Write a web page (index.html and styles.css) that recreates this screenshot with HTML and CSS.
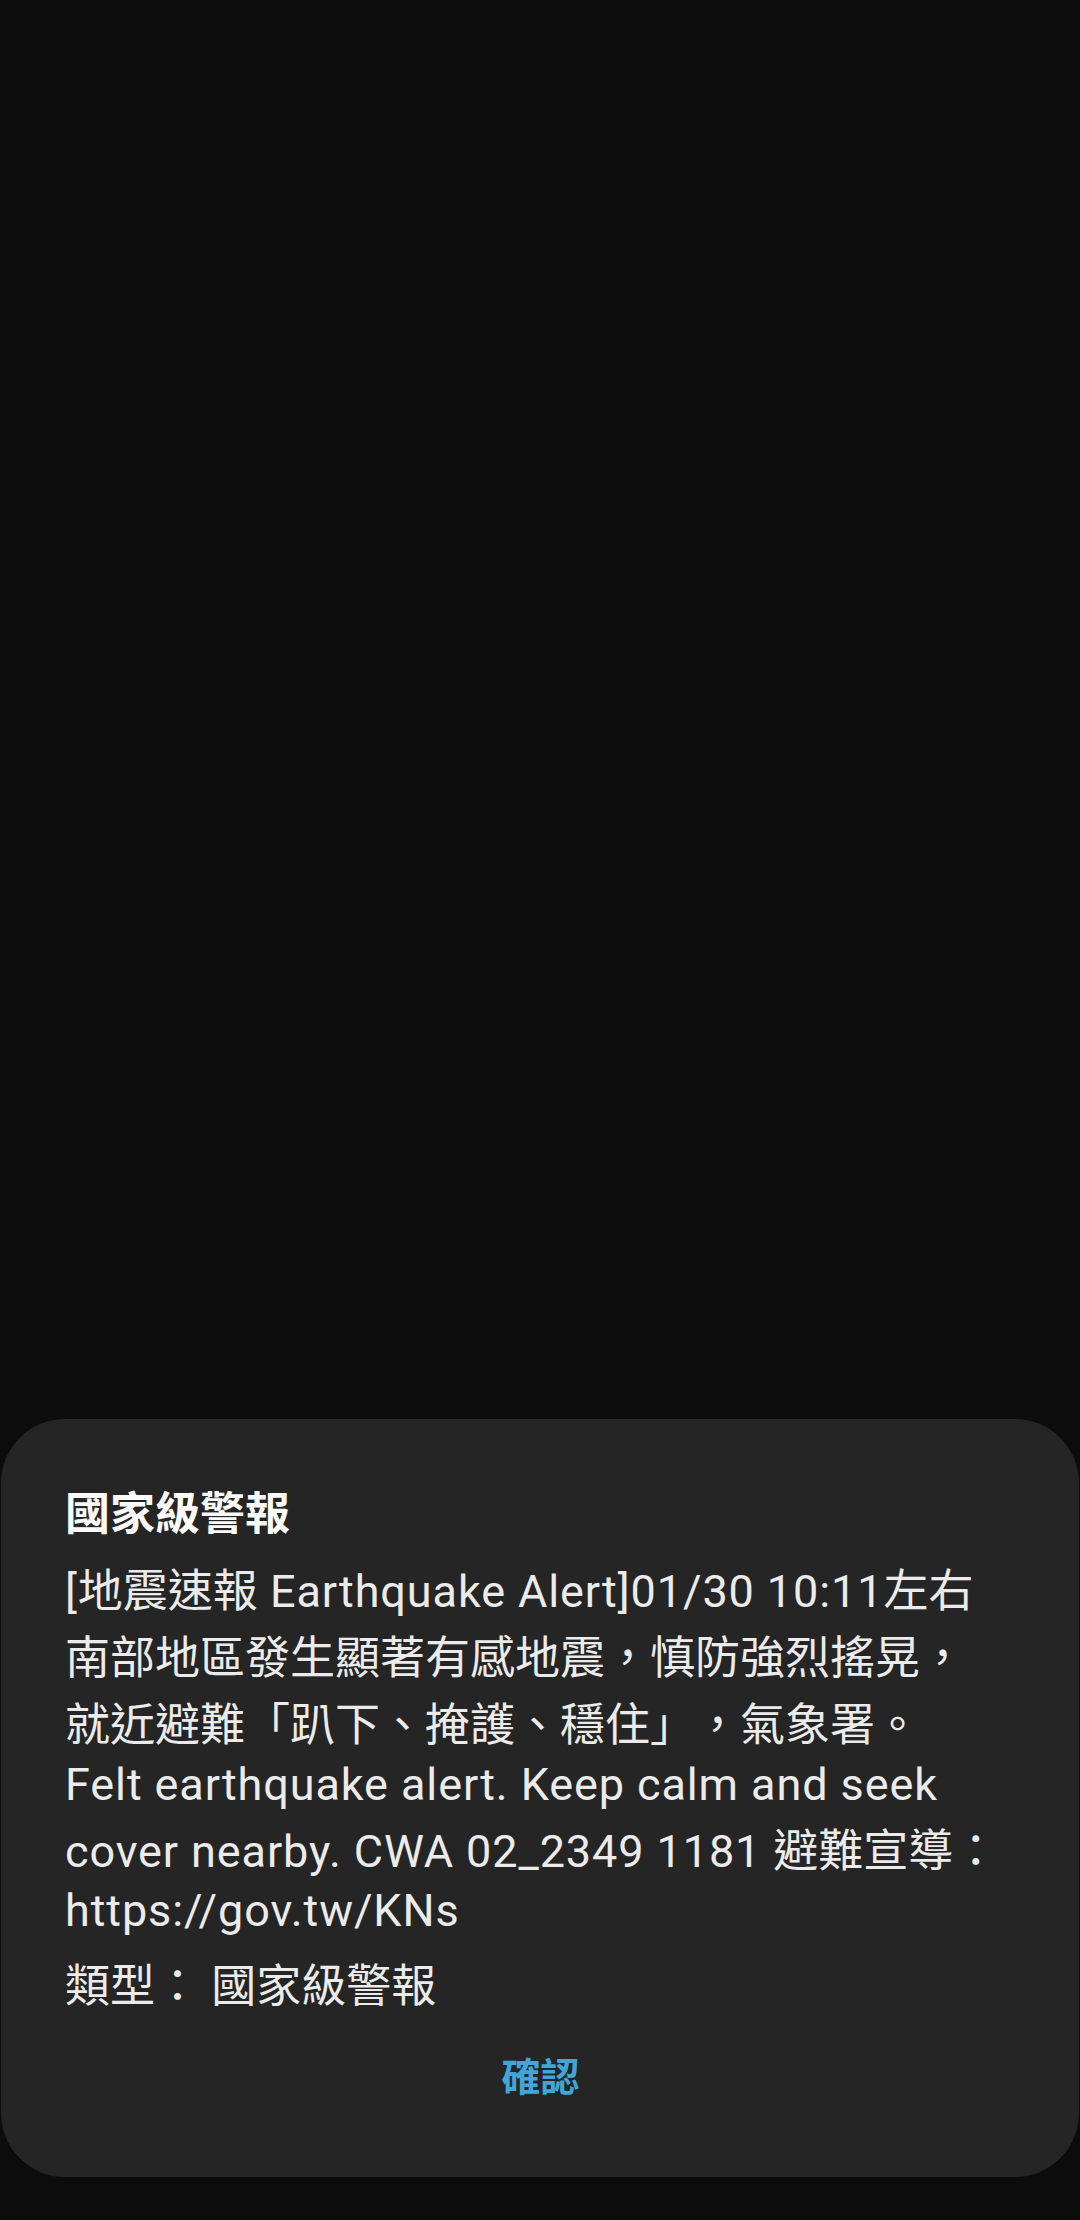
FILE: index.html
```html
<!DOCTYPE html>
<html lang="zh-Hant">
<head>
<meta charset="utf-8">
<title>國家級警報</title>
<link rel="stylesheet" href="styles.css">
</head>
<body>
<div class="screen">
  <div class="dialog">
    <h1 class="title">國家級警報</h1>
    <div class="msg">
      <span class="ln c"><span class="en">[</span>地震速報<span class="en"> Earthquake Alert]01/30 10:11</span>左右</span>
      <span class="ln c">南部地區發生顯著有感地震，慎防強烈搖晃，</span>
      <span class="ln c">就近避難「趴下、掩護、穩住」，氣象署。</span>
      <span class="ln l"><span class="en">Felt earthquake alert. Keep calm and seek</span></span>
      <span class="ln c"><span class="en">cover nearby. CWA 02_2349 1181 </span>避難宣導：</span>
      <span class="ln l"><span class="en">https://gov.tw/KNs</span></span>
    </div>
    <p class="type">類型： 國家級警報</p>
    <div class="actions">
      <button class="btn">確認</button>
    </div>
  </div>
</div>
</body>
</html>
```

FILE: styles.css
```css
html, body {
  margin: 0;
  padding: 0;
  background: #0c0c0c;
}

body {
  font-family: Roboto, "Noto Sans CJK TC", sans-serif;
  color: #ebebeb;
  text-spacing-trim: space-all;
}

.screen {
  width: 1080px;
  height: 2220px;
  box-sizing: border-box;
  display: flex;
  flex-direction: column;
  justify-content: flex-end;
  padding: 0 1px 43px;
}

.dialog {
  background: #252525;
  border-radius: 64px;
  padding: 66px 63px 79px 64px;
  display: flex;
  flex-direction: column;
}

.title {
  margin: 0;
  font-size: 45px;
  line-height: 60px;
  font-weight: 700;
  color: #fafafa;
}

.msg {
  display: flex;
  flex-direction: column;
  font-size: 45px;
}

.ln {
  display: block;
  line-height: 40px;
  white-space: nowrap;
}

.ln.c {
  padding-top: 27px;
}

.ln.l {
  padding-top: 19px;
}

.en {
  letter-spacing: 0.9px;
}

.type {
  margin: 36px 0 0;
  font-size: 45px;
  line-height: 40px;
  white-space: nowrap;
}

.actions {
  display: flex;
  justify-content: center;
  margin-top: 51px;
}

.btn {
  font-family: Roboto, "Noto Sans CJK TC", sans-serif;
  background: none;
  border: 0;
  padding: 0;
  margin: 0;
  font-size: 39px;
  line-height: 40px;
  font-weight: 700;
  color: #40a6d7;
}
```
